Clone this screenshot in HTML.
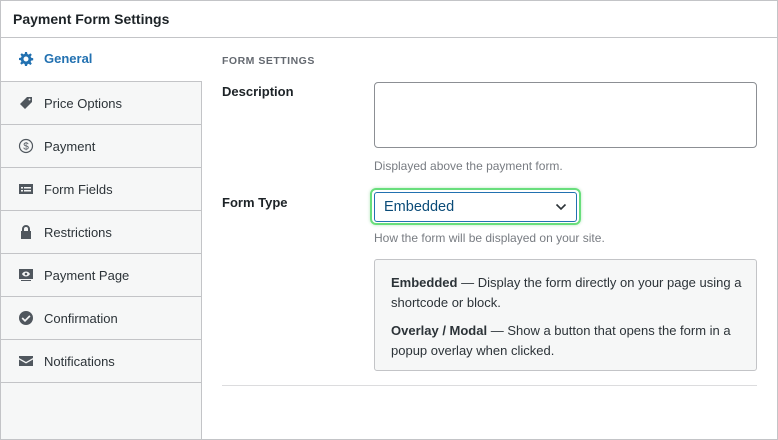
<!DOCTYPE html>
<html><head><style>
*{box-sizing:border-box;margin:0;padding:0}
body{width:778px;height:440px;background:#fff;font-family:"Liberation Sans",sans-serif;font-size:13px;color:#1d2327;position:relative;overflow:hidden}
.frame{position:absolute;left:0;top:0;width:778px;height:440px;border:1px solid #c3c4c7}
.hdr{position:absolute;left:1px;top:1px;width:776px;height:37px;border-bottom:1px solid #c3c4c7;font-weight:bold;font-size:14px;padding:10px 12px}
.side{position:absolute;left:1px;top:38px;width:201px;height:401px;background:#f6f7f7;border-right:1px solid #c3c4c7}
.it{height:43px;border-bottom:1px solid #c3c4c7;display:flex;align-items:center;padding-left:17px;color:#2c3338;font-size:13px}
.it svg{width:16px;height:16px;margin-right:10px;fill:#50575e}
.it.act{background:#fff;color:#2271b1;font-weight:bold;margin-right:-1px;height:44px;padding-bottom:2px}
.it.act svg{fill:#2271b1}
.a{position:absolute}
.lbl{font-weight:bold;font-size:13px}
.help{color:#787c82;font-size:12px}
</style></head><body>
<div class="frame"></div>
<div class="hdr">Payment Form Settings</div>
<div class="side">
<div class="it act"><svg viewBox="0 0 16 16"><path d="M7 1h2l.4 2 1.3.6 1.7-1.2 1.4 1.4-1.2 1.7.6 1.3 2 .4v2l-2 .4-.6 1.3 1.2 1.7-1.4 1.4-1.7-1.2-1.3.6L9 15H7l-.4-2-1.3-.6-1.700 1.2-1.4-1.4 1.2-1.7-.6-1.3L1 9V7l2-.4.6-1.3-1.2-1.7 1.4-1.4 1.7 1.2 1.3-.6zM8 5.5a2.5 2.5 0 1 0 0 5 2.5 2.5 0 1 0 0-5z"/></svg>General</div>
<div class="it"><svg viewBox="0 0 16 16"><path d="M9 2h5v5l-7 7-5-5zM11.5 3.5a1 1 0 1 0 0 2 1 1 0 1 0 0-2z"/></svg>Price Options</div>
<div class="it"><svg viewBox="0 0 16 16"><circle cx="8" cy="8" r="6.5" fill="none" stroke="#50575e" stroke-width="1.2"/><text x="8" y="11.5" font-size="10" text-anchor="middle" fill="#50575e" font-family="Liberation Sans">$</text></svg>Payment</div>
<div class="it"><svg viewBox="0 0 16 16"><path d="M1 3h14v10H1zM3 6v1.5h2V6zm3 0v1.5h7V6zM3 9v1.5h2V9zm3 0v1.5h7V9z" fill-rule="evenodd"/></svg>Form Fields</div>
<div class="it"><svg viewBox="0 0 16 16"><path d="M4 7V5a4 4 0 0 1 8 0v2h1v8H3V7zm2 0h4V5a2 2 0 0 0-4 0z"/></svg>Restrictions</div>
<div class="it"><svg viewBox="0 0 16 16"><path d="M1 2h14v10H1zM8 4.5C6 4.5 4.5 6 4 7c.5 1 2 2.5 4 2.5S11.5 8 12 7c-.5-1-2-2.5-4-2.5zM8 5.7a1.3 1.3 0 1 1 0 2.6 1.3 1.3 0 0 1 0-2.6zM3 13h10v1H3z" fill-rule="evenodd"/></svg>Payment Page</div>
<div class="it"><svg viewBox="0 0 16 16"><path d="M8 1a7 7 0 1 0 0 14A7 7 0 0 0 8 1zm3.3 4.3l1.2 1.2L7 12 3.6 8.6l1.2-1.2L7 9.6z"/></svg>Confirmation</div>
<div class="it"><svg viewBox="0 0 16 16"><path d="M1 3h14v2L8 9 1 5zm0 3.5l7 4 7-4V13H1z"/></svg>Notifications</div>
</div>
<div class="a" style="left:222px;top:55px;font-size:10.5px;font-weight:bold;color:#646970;letter-spacing:.5px">FORM SETTINGS</div>
<div class="a lbl" style="left:222px;top:84px">Description</div>
<div class="a" style="left:374px;top:82px;width:383px;height:66px;border:1px solid #8c8f94;border-radius:4px"></div>
<div class="a help" style="left:374px;top:159px">Displayed above the payment form.</div>
<div class="a lbl" style="left:222px;top:195px">Form Type</div>
<div class="a" style="left:370px;top:188px;width:211px;height:37px;border:2px solid #68de7c;border-radius:6px;box-shadow:0 0 3px #b8e6bf"></div>
<div class="a" style="left:374px;top:192px;width:203px;height:30px;border:1px solid #2271b1;border-radius:3px;color:#0a4b78;font-size:14.5px;padding:6px 9px">Embedded
<svg style="position:absolute;right:9px;top:10px" width="12" height="8" viewBox="0 0 12 8"><path d="M1.5 1.5L6 6l4.5-4.5" fill="none" stroke="#2c3338" stroke-width="1.6"/></svg></div>
<div class="a help" style="left:374px;top:231px">How the form will be displayed on your site.</div>
<div class="a" style="left:374px;top:259px;width:383px;height:112px;background:#f6f7f7;border:1px solid #c3c4c7;border-radius:3px;padding:13px 12px 13px 16px;font-size:13px;line-height:20px;color:#2c3338">
<div><b>Embedded</b> — Display the form directly on your page using a shortcode or block.</div>
<div style="margin-top:8px"><b>Overlay / Modal</b> — Show a button that opens the form in a popup overlay when clicked.</div>
</div>
<div class="a" style="left:222px;top:385px;width:535px;height:1px;background:#dcdcde"></div>
</body></html>
